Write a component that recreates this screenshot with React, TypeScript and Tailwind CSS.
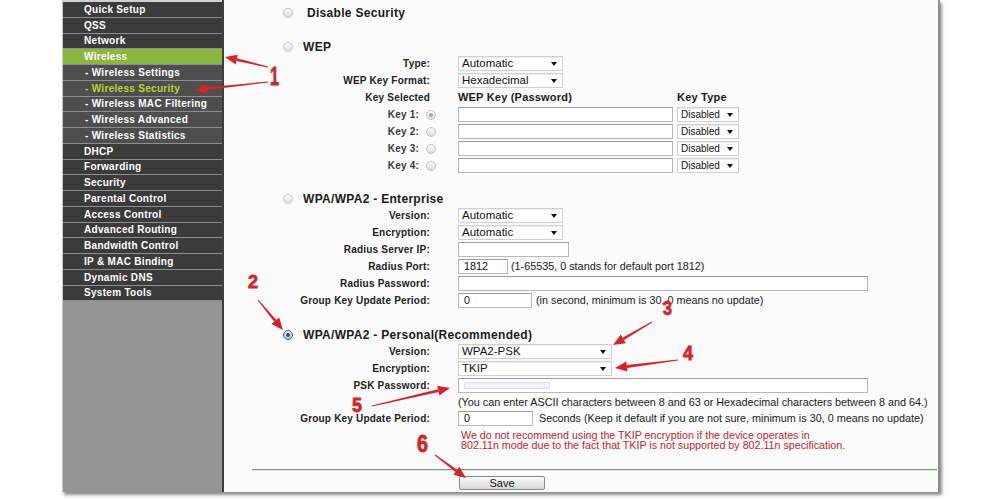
import type { ReactNode } from 'react'

const menu = [
  { name: 'Quick Setup' },
  { name: 'QSS' },
  { name: 'Network' },
  { name: 'Wireless', active: true },
  { name: '- Wireless Settings', sub: true },
  { name: '- Wireless Security', sub: true, current: true },
  { name: '- Wireless MAC Filtering', sub: true },
  { name: '- Wireless Advanced', sub: true },
  { name: '- Wireless Statistics', sub: true },
  { name: 'DHCP' },
  { name: 'Forwarding' },
  { name: 'Security' },
  { name: 'Parental Control' },
  { name: 'Access Control' },
  { name: 'Advanced Routing' },
  { name: 'Bandwidth Control' },
  { name: 'IP & MAC Binding' },
  { name: 'Dynamic DNS' },
  { name: 'System Tools' },
]

const RED = '#d5232a'

// callouts drawn over the page: tail -> tip
const arrows = [
  [268, 67, 225, 57],
  [268, 82, 195, 90],
  [258, 300, 283, 330],
  [652, 322, 613, 345],
  [678, 360, 615, 368],
  [372, 406, 450, 388],
  [435, 455, 466, 478],
]

const marks = [
  { n: '1', x: 270, y: 85, size: 25, w: 9 },
  { n: '2', x: 248, y: 288, size: 19, w: 10 },
  { n: '3', x: 663, y: 315, size: 21, w: 9 },
  { n: '4', x: 683, y: 360, size: 21, w: 10 },
  { n: '5', x: 352, y: 412, size: 21, w: 10 },
  { n: '6', x: 417, y: 452, size: 23, w: 11 },
]

function Arrow({ x1, y1, x2, y2 }: { x1: number; y1: number; x2: number; y2: number }) {
  const len = Math.hypot(x2 - x1, y2 - y1)
  const ux = (x2 - x1) / len
  const uy = (y2 - y1) / len
  const headLen = 12
  const headW = 5
  const bx = x2 - ux * headLen
  const by = y2 - uy * headLen
  // shaft tapers from thin tail to thicker base of the head
  const t0 = 0.5
  const t1 = 1.4
  const shaft = [
    [x1 - uy * t0, y1 + ux * t0],
    [bx - uy * t1, by + ux * t1],
    [bx + uy * t1, by - ux * t1],
    [x1 + uy * t0, y1 - ux * t0],
  ]
    .map((p) => p.join(','))
    .join(' ')
  const head = `${x2},${y2} ${bx - uy * headW},${by + ux * headW} ${bx + uy * headW},${by - ux * headW}`
  return (
    <g fill={RED}>
      <polygon points={shaft} />
      <polygon points={head} />
    </g>
  )
}

function Radio({ checked, dot }: { checked?: boolean; dot?: boolean }) {
  if (checked) {
    return (
      <span className="flex h-[10px] w-[10px] items-center justify-center rounded-full border border-[#4b5563] bg-gradient-to-b from-[#e8eef8] to-[#b9c6dc]">
        <span className="h-[4px] w-[4px] rounded-full bg-[#1f4f9e]" />
      </span>
    )
  }
  return (
    <span className="flex h-[10px] w-[10px] items-center justify-center rounded-full border border-[#c4c4c4] bg-gradient-to-b from-[#fdfdfd] to-[#dcdcdc]">
      {dot && <span className="h-[4px] w-[4px] rounded-full bg-[#a8a8a8]" />}
    </span>
  )
}

function Select({ value, className }: { value: string; className: string }) {
  return (
    <div
      className={`flex h-[15px] items-center justify-between border border-[#d0d0d0] bg-white pl-[3px] pr-[5px] text-[#111] shadow-[inset_0_1px_0_#eee] ${className}`}
    >
      <span>{value}</span>
      <span className="h-0 w-0 border-x-[3px] border-t-[4px] border-x-transparent border-t-[#111]" />
    </div>
  )
}

function Input({ className, children }: { className: string; children?: ReactNode }) {
  return (
    <div
      className={`flex h-[15px] items-center border border-[#b8b8b8] border-t-[#9c9c9c] bg-white pl-[5px] text-[10.8px] text-[#111] ${className}`}
    >
      {children}
    </div>
  )
}

function Row({ label, children }: { label: ReactNode; children?: ReactNode }) {
  return (
    <div className="flex h-[17px] items-center">
      <div className="flex w-[206px] justify-end text-[10px] font-bold tracking-[0.2px] text-[#222]">{label}</div>
      <div className="ml-[28px] flex items-center">{children}</div>
    </div>
  )
}

function Option({ label, checked, className }: { label: string; checked?: boolean; className: string }) {
  return (
    <div className="flex h-[17px] items-center pl-[59px]">
      <Radio checked={checked} />
      <span className={`text-[12px] font-bold tracking-[0.3px] text-[#1a1a1a] ${className}`}>{label}</span>
    </div>
  )
}

function KeyLabel({ n, dot }: { n: number; dot?: boolean }) {
  return (
    <span className="-mr-[6px] flex items-center gap-[7px] text-[#3a3a3a]">
      Key {n}:
      <Radio dot={dot} />
    </span>
  )
}

function Hint({ children }: { children: ReactNode }) {
  return <span className="text-[10.8px] text-[#1a1a1a]">{children}</span>
}

function Sidebar() {
  return (
    <aside className="flex w-[160px] flex-col border-l border-[#c9c9c9] bg-[#959595]">
      <div className="h-[2px] bg-[#d0d0d0]" />
      {menu.map((item) => (
        <div
          key={item.name}
          className={`flex h-[15.75px] shrink-0 items-center border-b border-[#8e8e8e] text-[10px] font-bold tracking-[0.3px] ${
            item.active ? 'bg-[#8bb63f]' : item.sub ? 'bg-[#4e4e4e]' : 'bg-[#3b3b3b]'
          } ${item.current ? 'text-[#b9d62f]' : 'text-white'} ${item.sub ? 'pl-[22px]' : 'pl-[21px]'}`}
        >
          {item.name}
        </div>
      ))}
    </aside>
  )
}

export default function App() {
  return (
    <div className="relative h-[500px] w-[1000px] overflow-hidden bg-white font-['Liberation_Sans',Arial,sans-serif]">
      <div className="ml-[62px] flex h-[492px] w-[878px] shadow-[2px_3px_3px_rgba(0,0,0,0.45)]">
        <Sidebar />
        <div className="w-[2px] bg-[#3f3f3f]" />

        <main className="flex flex-1 flex-col border-r-2 border-[#8c8c8c] bg-[#fbfbfb] text-[11.5px]">
          <div className="mt-[4px]" />
          <Option label="Disable Security" className="ml-[14px]" />

          <div className="mt-[17px]" />
          <Option label="WEP" className="ml-[10px]" />
          <Row label="Type:">
            <Select value="Automatic" className="w-[105px]" />
          </Row>
          <Row label="WEP Key Format:">
            <Select value="Hexadecimal" className="w-[105px]" />
          </Row>
          <Row label="Key Selected">
            <span className="w-[219px] text-[11px] font-bold tracking-[0.2px] text-[#1a1a1a]">WEP Key (Password)</span>
            <span className="text-[11px] font-bold tracking-[0.2px] text-[#1a1a1a]">Key Type</span>
          </Row>
          {[1, 2, 3, 4].map((n) => (
            <Row key={n} label={<KeyLabel n={n} dot={n === 1} />}>
              <Input className="w-[215px]" />
              <Select value="Disabled" className="ml-[4px] w-[62px] text-[10px]" />
            </Row>
          ))}

          <div className="mt-[16px]" />
          <Option label="WPA/WPA2 - Enterprise" className="ml-[10px]" />
          <Row label="Version:">
            <Select value="Automatic" className="w-[105px]" />
          </Row>
          <Row label="Encryption:">
            <Select value="Automatic" className="w-[105px]" />
          </Row>
          <Row label="Radius Server IP:">
            <Input className="w-[111px]" />
          </Row>
          <Row label="Radius Port:">
            <Input className="w-[50px]">1812</Input>
            <span className="ml-[3px]">
              <Hint>(1-65535, 0 stands for default port 1812)</Hint>
            </span>
          </Row>
          <Row label="Radius Password:">
            <Input className="w-[410px]" />
          </Row>
          <Row label="Group Key Update Period:">
            <Input className="w-[74px]">0</Input>
            <span className="ml-[4px]">
              <Hint>(in second, minimum is 30, 0 means no update)</Hint>
            </span>
          </Row>

          <div className="mt-[17px]" />
          <Option label="WPA/WPA2 - Personal(Recommended)" checked className="ml-[10px]" />
          <Row label="Version:">
            <Select value="WPA2-PSK" className="w-[154px]" />
          </Row>
          <Row label="Encryption:">
            <Select value="TKIP" className="w-[154px]" />
          </Row>
          <Row label="PSK Password:">
            <Input className="w-[410px]">
              <span className="h-[7px] w-[86px] border border-[#dcdff0] bg-[#f1f2fb] blur-[0.4px]" />
            </Input>
          </Row>
          <div className="flex h-[16px] items-center pl-[234px]">
            <Hint>(You can enter ASCII characters between 8 and 63 or Hexadecimal characters between 8 and 64.)</Hint>
          </div>
          <Row label="Group Key Update Period:">
            <Input className="w-[75px]">0</Input>
            <span className="ml-[6px]">
              <Hint>Seconds (Keep it default if you are not sure, minimum is 30, 0 means no update)</Hint>
            </span>
          </Row>
          <div className="mt-[3px] pl-[237px] text-[10.7px] leading-[10px] text-[#c0282d]">
            <p>We do not recommend using the TKIP encryption if the device operates in</p>
            <p>802.11n mode due to the fact that TKIP is not supported by 802.11n specification.</p>
          </div>

          <div className="ml-[28px] mr-[1px] mt-[19px] border-t border-b border-t-[#7f9c76] border-b-[#dde6da]" />
          <div className="mt-[5px] pl-[235px]">
            <button className="flex h-[14px] w-[86px] items-center justify-center rounded-[2px] border border-[#8a8a8a] bg-gradient-to-b from-[#fafafa] to-[#d8d8d8] text-[11px] text-[#111]">
              Save
            </button>
          </div>
        </main>
      </div>

      <svg className="pointer-events-none absolute inset-0" width={1000} height={500}>
        {arrows.map(([x1, y1, x2, y2], i) => (
          <Arrow key={i} x1={x1} y1={y1} x2={x2} y2={y2} />
        ))}
        {marks.map((m) => (
          <text
            key={m.n}
            x={m.x}
            y={m.y}
            fill={RED}
            stroke={RED}
            strokeWidth={0.8}
            fontSize={m.size}
            fontWeight={700}
            fontFamily="'Liberation Sans', Arial, sans-serif"
            textLength={m.w}
            lengthAdjust="spacingAndGlyphs"
          >
            {m.n}
          </text>
        ))}
      </svg>
    </div>
  )
}
